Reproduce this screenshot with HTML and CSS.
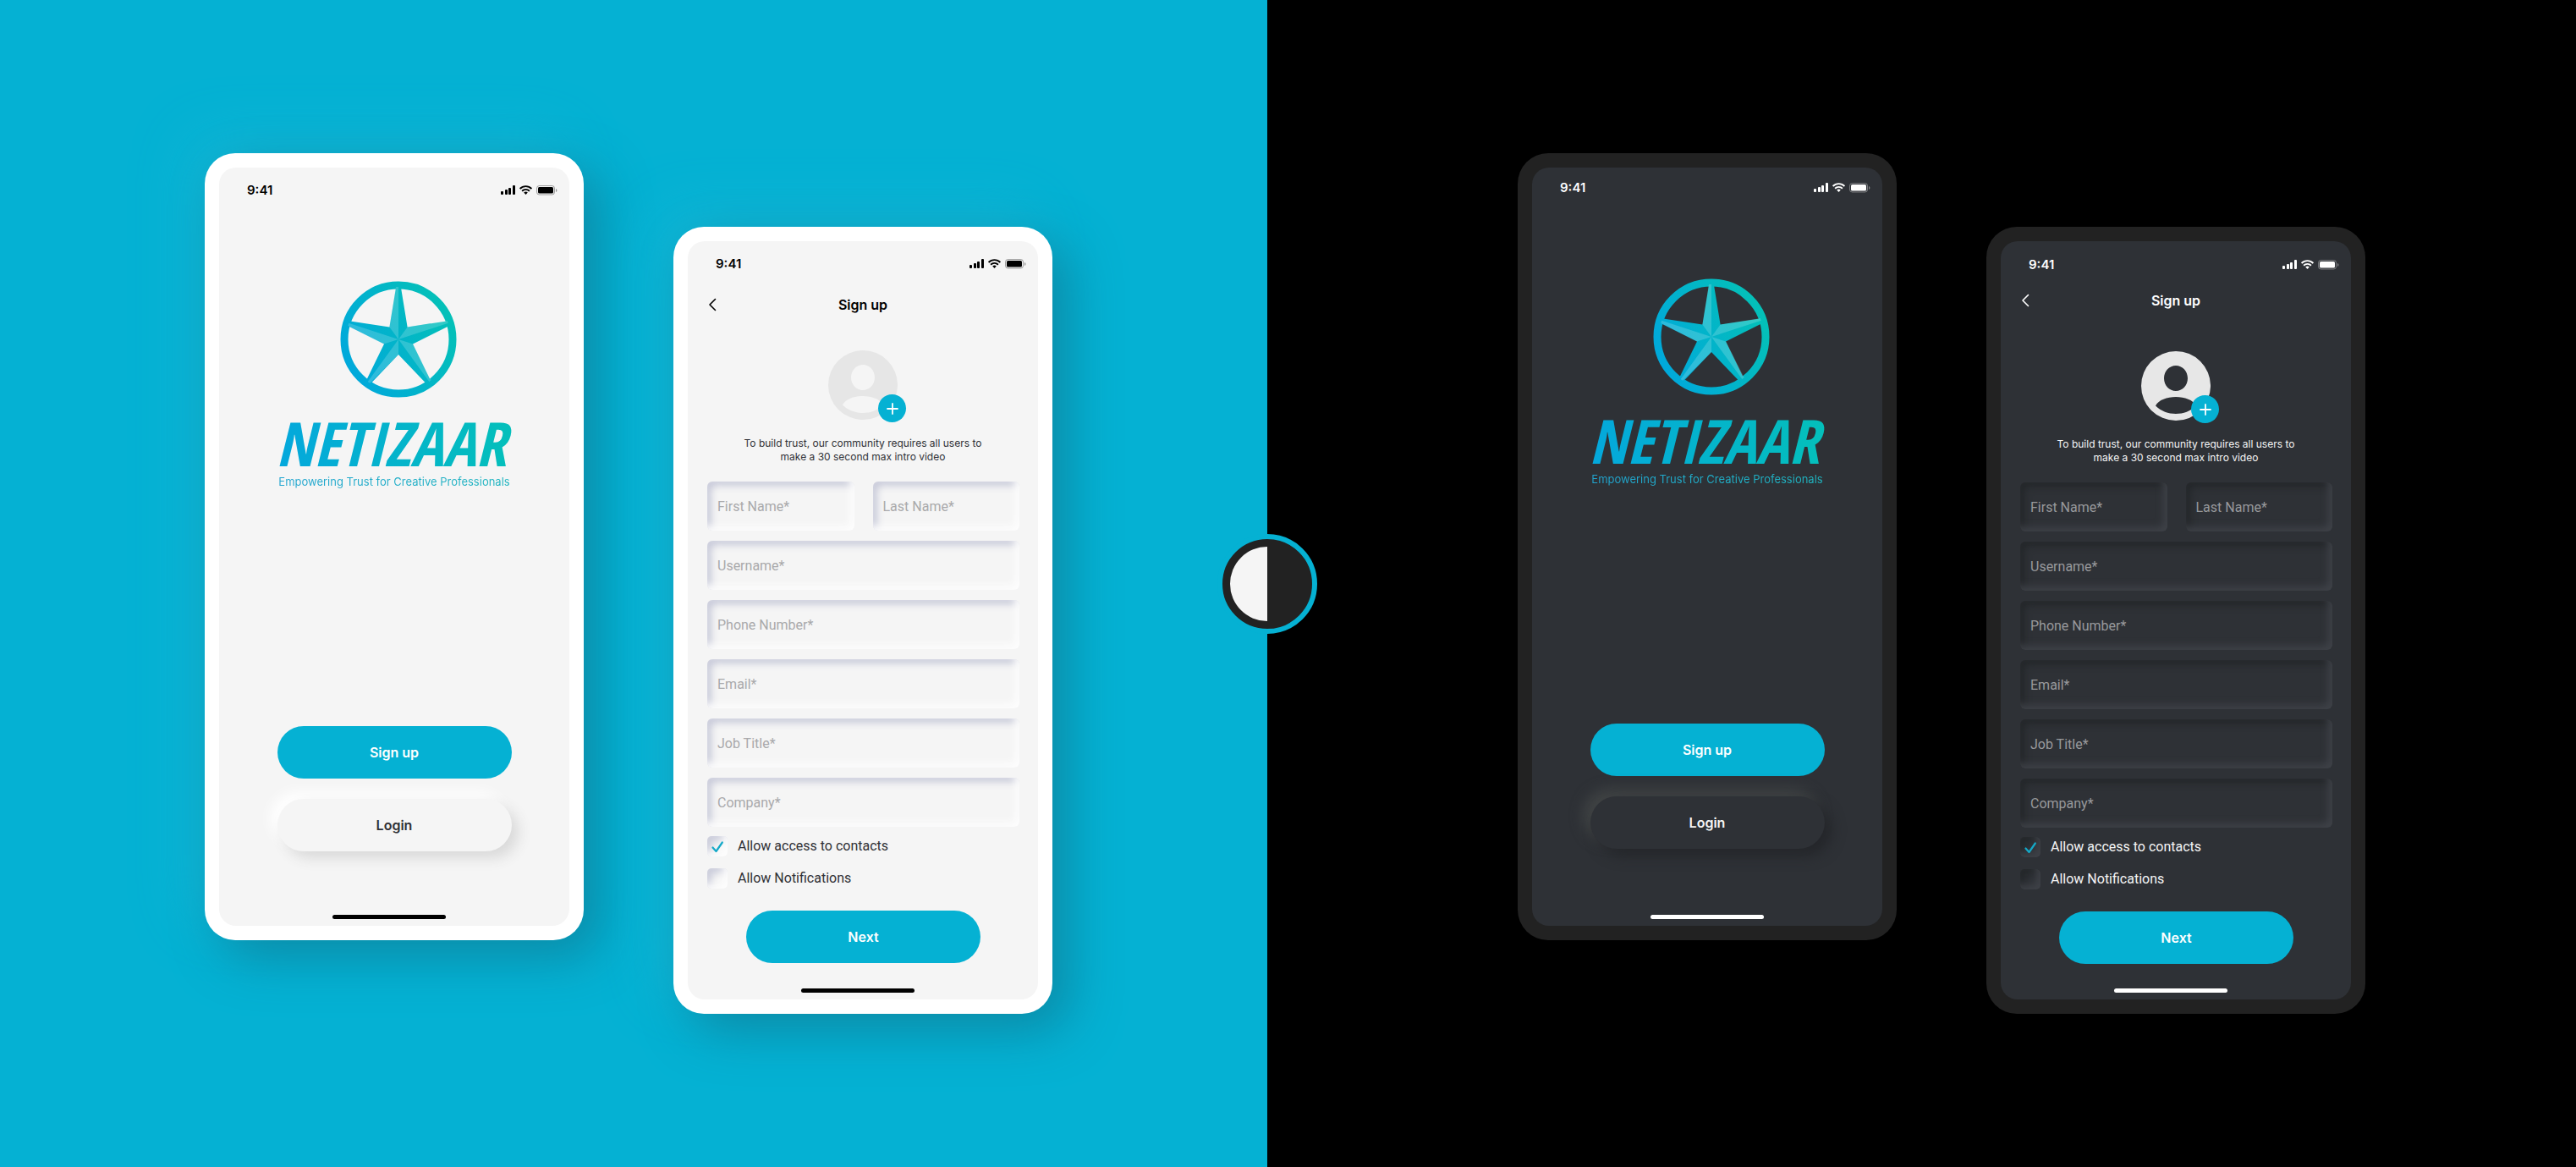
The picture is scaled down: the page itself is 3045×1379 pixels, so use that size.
FILE: index.html
```
<!DOCTYPE html>
<html lang="en">
<head>
<meta charset="utf-8">
<meta name="viewport" content="width=device-width, initial-scale=1">
<title>Netizaar</title>
<link rel="stylesheet" href="styles.css">
</head>
<body>
<svg class="defs" aria-hidden="true">
  <defs>
    <linearGradient id="emblem-fill" gradientUnits="userSpaceOnUse" x1="78" y1="104" x2="200" y2="42">
      <stop offset="0" stop-color="#00a8dc"/>
      <stop offset="1" stop-color="#04c0b8"/>
    </linearGradient>
    <linearGradient id="word-fill" gradientUnits="userSpaceOnUse" x1="0" y1="200" x2="270" y2="190">
      <stop offset="0" stop-color="#04a8dc"/>
      <stop offset="1" stop-color="#04bfbb"/>
    </linearGradient>
    <clipPath id="emblem-clip"><circle r="62"/></clipPath>
    <symbol id="logo" viewBox="0 0 270 224" overflow="visible">
      <circle cx="140" cy="69" r="64" fill="none" stroke="url(#emblem-fill)" stroke-width="9"/>
      <path fill="url(#emblem-fill)" d="M137 8h6l7.600 46.400 46.400-7 2 6-42 21.200 21 43-5 4L140 87l-33 34.600-5-4 21-43-42-21.200 2-6 46.400 7Z"/>
      <g transform="translate(140 69)" fill="#fff" fill-opacity=".18">
        <g clip-path="url(#emblem-clip)">
          <path id="facet" d="M0 0-10.600-14.600-3-62H0Z"/>
          <use href="#facet" transform="rotate(72)"/>
          <use href="#facet" transform="rotate(144)"/>
          <use href="#facet" transform="rotate(216)"/>
          <use href="#facet" transform="rotate(288)"/>
        </g>
      </g>
      <text class="wordmark" x="131" y="219" text-anchor="middle">NETIZAAR</text>
    </symbol>
    <symbol id="status-icons" viewBox="0 0 67 12">
      <g fill="currentColor">
        <rect x="0" y="7" width="3" height="4" rx="1"/>
        <rect x="5" y="5" width="3" height="6" rx="1"/>
        <rect x="9" y="3" width="3" height="8" rx="1"/>
        <rect x="14" y="0" width="3" height="11" rx="1"/>
        <path d="M29.500 11 27.200 8.600a3.300 3.300 0 0 1 4.600 0Z"/>
      </g>
      <g fill="none" stroke="currentColor" stroke-width="1.900">
        <path d="M22.600 4a9.800 9.800 0 0 1 13.800 0"/>
        <path d="M25.100 6.700a6.300 6.300 0 0 1 8.800 0"/>
      </g>
      <rect x="42.500" y=".5" width="21" height="10.500" rx="3" fill="none" stroke="currentColor" stroke-opacity=".35"/>
      <rect x="44" y="2" width="18" height="7.500" rx="1.500" fill="currentColor"/>
      <path d="M65 4v4c1.900-.6 1.900-3.400 0-4Z" fill="currentColor" fill-opacity=".4"/>
    </symbol>
    <symbol id="chevron" viewBox="0 0 10 16">
      <path d="M8.500 1.500 2 8l6.500 6.500" fill="none" stroke="currentColor" stroke-width="1.600" stroke-linecap="round" stroke-linejoin="round"/>
    </symbol>
    <symbol id="person" viewBox="0 0 82 82">
      <path fill="currentColor" fill-rule="evenodd" d="M41 0a41 41 0 1 1 0 82 41 41 0 0 1 0-82ZM41 17c-7.700 0-14 6.500-14 15s6.300 15 14 15 14-6.500 14-15-6.300-15-14-15ZM17 64.500C30 77.200 52 77.200 65 64.500 58 50.500 24 50.500 17 64.500Z"/>
    </symbol>
    <symbol id="plus" viewBox="0 0 14 14">
      <path d="M7 1v12M1 7h12" fill="none" stroke="currentColor" stroke-width="1.800" stroke-linecap="round"/>
    </symbol>
    <symbol id="check" viewBox="0 0 24 24">
      <path d="M6.500 13.500 10.500 18 17.800 7.500" fill="none" stroke="currentColor" stroke-width="2.200" stroke-linecap="round" stroke-linejoin="round"/>
    </symbol>
  </defs>
</svg>

<main class="stage">
  <section class="side light" aria-label="Light theme">
    <article class="phone">
      <div class="screen welcome">
        <div class="status"><span>9:41</span><svg class="status-icons" aria-hidden="true"><use href="#status-icons"/></svg></div>
        <div class="brand">
          <svg class="logo" aria-label="Netizaar"><use href="#logo"/></svg>
          <p class="tagline">Empowering Trust for Creative Professionals</p>
        </div>
        <div class="actions">
          <button class="btn primary" type="button">Sign up</button>
          <button class="btn raised" type="button">Login</button>
        </div>
        <div class="home"></div>
      </div>
    </article>
    <article class="phone lower">
      <div class="screen signup">
        <div class="status"><span>9:41</span><svg class="status-icons" aria-hidden="true"><use href="#status-icons"/></svg></div>
        <header class="bar">
          <button class="back" type="button" aria-label="Back"><svg aria-hidden="true"><use href="#chevron"/></svg></button>
          <h2>Sign up</h2>
        </header>
        <div class="avatar">
          <svg class="person" aria-hidden="true"><use href="#person"/></svg>
          <button class="add" type="button" aria-label="Add intro video"><svg aria-hidden="true"><use href="#plus"/></svg></button>
        </div>
        <p class="hint">To build trust, our community requires all users to make a 30 second max intro video</p>
        <form class="form">
          <div class="fields">
            <input type="text" placeholder="First Name*" aria-label="First Name">
            <input type="text" placeholder="Last Name*" aria-label="Last Name">
            <input class="wide" type="text" placeholder="Username*" aria-label="Username">
            <input class="wide" type="tel" placeholder="Phone Number*" aria-label="Phone Number">
            <input class="wide" type="email" placeholder="Email*" aria-label="Email">
            <input class="wide" type="text" placeholder="Job Title*" aria-label="Job Title">
            <input class="wide" type="text" placeholder="Company*" aria-label="Company">
          </div>
          <div class="options">
            <label class="option"><span class="box"><input type="checkbox" checked><svg aria-hidden="true"><use href="#check"/></svg></span>Allow access to contacts</label>
            <label class="option"><span class="box"><input type="checkbox"><svg aria-hidden="true"><use href="#check"/></svg></span>Allow Notifications</label>
          </div>
          <button class="btn primary" type="button">Next</button>
        </form>
        <div class="home"></div>
      </div>
    </article>
  </section>

  <section class="side dark" aria-label="Dark theme">
    <article class="phone">
      <div class="screen welcome">
        <div class="status"><span>9:41</span><svg class="status-icons" aria-hidden="true"><use href="#status-icons"/></svg></div>
        <div class="brand">
          <svg class="logo" aria-label="Netizaar"><use href="#logo"/></svg>
          <p class="tagline">Empowering Trust for Creative Professionals</p>
        </div>
        <div class="actions">
          <button class="btn primary" type="button">Sign up</button>
          <button class="btn raised" type="button">Login</button>
        </div>
        <div class="home"></div>
      </div>
    </article>
    <article class="phone lower">
      <div class="screen signup">
        <div class="status"><span>9:41</span><svg class="status-icons" aria-hidden="true"><use href="#status-icons"/></svg></div>
        <header class="bar">
          <button class="back" type="button" aria-label="Back"><svg aria-hidden="true"><use href="#chevron"/></svg></button>
          <h2>Sign up</h2>
        </header>
        <div class="avatar">
          <svg class="person" aria-hidden="true"><use href="#person"/></svg>
          <button class="add" type="button" aria-label="Add intro video"><svg aria-hidden="true"><use href="#plus"/></svg></button>
        </div>
        <p class="hint">To build trust, our community requires all users to make a 30 second max intro video</p>
        <form class="form">
          <div class="fields">
            <input type="text" placeholder="First Name*" aria-label="First Name">
            <input type="text" placeholder="Last Name*" aria-label="Last Name">
            <input class="wide" type="text" placeholder="Username*" aria-label="Username">
            <input class="wide" type="tel" placeholder="Phone Number*" aria-label="Phone Number">
            <input class="wide" type="email" placeholder="Email*" aria-label="Email">
            <input class="wide" type="text" placeholder="Job Title*" aria-label="Job Title">
            <input class="wide" type="text" placeholder="Company*" aria-label="Company">
          </div>
          <div class="options">
            <label class="option"><span class="box"><input type="checkbox" checked><svg aria-hidden="true"><use href="#check"/></svg></span>Allow access to contacts</label>
            <label class="option"><span class="box"><input type="checkbox"><svg aria-hidden="true"><use href="#check"/></svg></span>Allow Notifications</label>
          </div>
          <button class="btn primary" type="button">Next</button>
        </form>
        <div class="home"></div>
      </div>
    </article>
    <button class="theme-toggle" type="button" aria-label="Switch theme"></button>
  </section>
</main>
</body>
</html>
```
FILE: styles.css
```
*,
*::before,
*::after {
  box-sizing: border-box;
}

body {
  margin: 0;
  font-family: Inter, "Liberation Sans", sans-serif;
  font-size: 16px;
  line-height: 20px;
}

h2,
p {
  margin: 0;
}

button,
input {
  font: inherit;
  color: inherit;
  border: 0;
  padding: 0;
  background: none;
}

svg {
  display: block;
}

.defs {
  position: absolute;
  width: 0;
  height: 0;
}

.stage {
  display: grid;
  grid-template-columns: 1498fr 1547fr;
  min-height: 100vh;
}

.side {
  position: relative;
  display: flex;
  align-items: center;
  align-content: center;
  justify-content: center;
  gap: 106px;
  padding-block: 48px;
  background: var(--backdrop);
}

/* Themes */
.light {
  --backdrop: #05b1d3;
  --frame: #fff;
  --screen: #f5f5f5;
  --ink: #000;
  --text: #303136;
  --placeholder: #a9a9ab;
  --person: #e6e6e6;
  --field-low: #c9cbda;
  --field-high: #fdfdfd;
  --raised-low: #d9d9d9;
  --raised-high: #fff;
  padding-right: 12px;
}

.dark {
  --backdrop: #000;
  --frame: #222;
  --screen: #2e3136;
  --ink: #fff;
  --text: #f5f5f5;
  --placeholder: #98999c;
  --person: #e7e7e7;
  --field-low: #24272a;
  --field-high: #3e4147;
  --raised-low: #24262a;
  --raised-high: #424546;
  padding-left: 47px;
}

/* Device */
.phone {
  flex: none;
  width: 448px;
  margin-bottom: 87px;
  padding: 17px;
  border-radius: 36px;
  background: var(--frame);
}

.phone.lower {
  margin: 87px 0 0;
}

.light .phone {
  box-shadow: 20px 20px 60px #0b8ba7, -20px -20px 60px #12b5d5;
}

.screen {
  display: flex;
  flex-direction: column;
  min-height: 896px;
  padding: 3px 0 8px;
  border-radius: 20px;
  background: var(--screen);
  color: var(--text);
}

.dark .welcome {
  padding-top: 0;
}

.dark .signup {
  padding-top: 4px;
}

.status {
  display: flex;
  align-items: center;
  justify-content: space-between;
  height: 47px;
  padding: 0 14px 0 33px;
  color: var(--ink);
  font-size: 15px;
  font-weight: 600;
}

.status-icons {
  width: 67px;
  height: 12px;
}

.home {
  align-self: center;
  width: 134px;
  height: 5px;
  margin: auto 12px 0 0;
  border-radius: 3px;
  background: var(--ink);
}

.dark .welcome .home {
  margin-right: 0;
}

/* Welcome screen */
.brand {
  display: flex;
  flex-direction: column;
  align-items: center;
  margin-top: 84px;
}

.logo {
  width: 270px;
  height: 224px;
  overflow: visible;
}

.wordmark {
  font-family: "Open Sans Condensed", "Roboto Condensed", sans-serif;
  font-size: 72px;
  font-style: italic;
  font-weight: 700;
  fill: url(#word-fill);
}

.tagline {
  background: linear-gradient(90deg, #21a5d0, #1fb5c0);
  background-clip: text;
  color: transparent;
  font-size: 13px;
  line-height: 26px;
  white-space: nowrap;
}

.actions {
  display: grid;
  justify-content: center;
  gap: 24px;
  margin-top: 276px;
}

.btn {
  width: 277px;
  height: 62px;
  border-radius: 31px;
  font-weight: 600;
}

.primary {
  background: #05b1d3;
  color: #fff;
}

.raised {
  background: var(--screen);
  box-shadow: 8px 8px 16px var(--raised-low), -8px -8px 16px var(--raised-high);
}

/* Sign-up screen */
.bar {
  display: grid;
  grid-template-columns: 1fr auto 1fr;
  align-items: center;
  height: 50px;
  margin-bottom: 29px;
  padding: 0 24px;
  color: var(--ink);
}

.dark .bar {
  height: 38px;
  margin-bottom: 41px;
}

.bar h2 {
  font-size: 16px;
  font-weight: 600;
}

.back svg {
  width: 10px;
  height: 16px;
}

.avatar {
  position: relative;
  align-self: center;
  width: 82px;
}

.person {
  width: 82px;
  height: 82px;
  color: var(--person);
}

.add {
  position: absolute;
  right: -10px;
  bottom: -3px;
  display: grid;
  place-items: center;
  width: 33px;
  height: 33px;
  border-radius: 50%;
  background: #05b1d3;
  color: #fff;
}

.add svg {
  width: 14px;
  height: 14px;
}

.hint {
  align-self: center;
  width: 300px;
  margin: 20px 0 21px;
  font-size: 12px;
  line-height: 16px;
  text-align: center;
}

.form {
  display: grid;
  padding: 0 22px 0 23px;
  font-family: Roboto, "Liberation Sans", sans-serif;
}

.fields {
  display: grid;
  grid-template-columns: 1fr 1fr;
  gap: 12px 22px;
}

.fields input {
  min-width: 0;
  height: 58px;
  padding: 0 12px;
  border-radius: 6px;
  box-shadow: inset -5px -5px 8px var(--field-high), inset 5px 5px 8px var(--field-low);
}

.fields .wide {
  grid-column: 1 / -1;
}

.fields input::placeholder {
  color: var(--placeholder);
  opacity: 1;
}

.options {
  display: grid;
  gap: 14px;
  margin: 11px 0 26px;
}

.option {
  display: flex;
  align-items: center;
  gap: 12px;
}

.box {
  display: grid;
}

.box input,
.box svg {
  grid-area: 1 / 1;
  width: 24px;
  height: 24px;
}

.box input {
  appearance: none;
  margin: 0;
  border-radius: 5px;
  box-shadow: inset -5px -5px 8px var(--field-high), inset 5px 5px 8px var(--field-low);
}

.box svg {
  visibility: hidden;
  color: #14a9c8;
  pointer-events: none;
}

.box input:checked + svg {
  visibility: visible;
}

.form .btn {
  justify-self: center;
  font-family: Inter, "Liberation Sans", sans-serif;
}

/* Badge on the seam between the two themes */
.theme-toggle {
  position: absolute;
  top: 50%;
  left: 0;
  width: 118px;
  height: 118px;
  border: 6px solid #05b1d3;
  border-radius: 50%;
  background: #222;
  transform: translate(-50%, -50%);
}

.theme-toggle::before {
  content: "";
  display: block;
  width: 44px;
  height: 88px;
  margin-left: 9px;
  border-radius: 44px 0 0 44px;
  background: #f5f5f5;
}
```
